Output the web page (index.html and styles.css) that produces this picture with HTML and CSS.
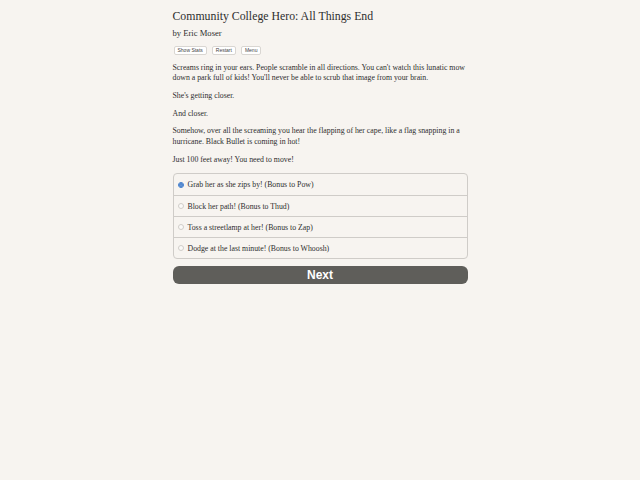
FILE: index.html
```html
<!DOCTYPE html>
<html lang="en">
<head>
    <meta charset="UTF-8">
    <title>Community College Hero: All Things End</title>
    <link rel="stylesheet" href="styles.css">
</head>
<body>
    <div class="container">
        <h1 class="title">Community College Hero: All Things End</h1>
        <h2 class="author">by Eric Moser</h2>
        <div class="buttons">
            <button class="small">Show Stats</button>
            <button class="small">Restart</button>
            <button class="small">Menu</button>
        </div>
        <div class="text">
            <p>Screams ring in your ears. People scramble in all directions. You can't watch this lunatic mow down a park full of kids! You'll never be able to scrub that image from your brain.</p>
            <p>She's getting closer.</p>
            <p>And closer.</p>
            <p>Somehow, over all the screaming you hear the flapping of her cape, like a flag snapping in a hurricane. Black Bullet is coming in hot!</p>
            <p>Just 100 feet away! You need to move!</p>
        </div>
        <form class="choices">
            <label class="choice"><input type="radio" name="choice" checked> Grab her as she zips by! (Bonus to Pow)</label>
            <label class="choice"><input type="radio" name="choice"> Block her path! (Bonus to Thud)</label>
            <label class="choice"><input type="radio" name="choice"> Toss a streetlamp at her! (Bonus to Zap)</label>
            <label class="choice"><input type="radio" name="choice"> Dodge at the last minute! (Bonus to Whoosh)</label>
        </form>
        <button class="next">Next</button>
    </div>
</body>
</html>
```

FILE: styles.css
```css
body {
    margin: 0;
    background-color: #f7f4f0;
    color: #2e2e2e;
    font-family: "Liberation Serif", serif;
}
.container {
    width: 295px;
    margin: 0 auto;
    padding-top: 9px;
}
.title {
    font-size: 11.8px;
    line-height: 14px;
    font-weight: normal;
    margin: 0 0 4.5px;
}
.author {
    font-size: 8.6px;
    line-height: 11px;
    font-weight: normal;
    margin: 0 0 7px;
}
.buttons {
    display: flex;
    gap: 5px;
    margin-left: 1px;
    margin-bottom: 8px;
}
.small {
    font-family: "Liberation Sans", sans-serif;
    font-size: 5px;
    height: 9px;
    padding: 0 3px;
    background-color: #fff;
    border: 1px solid #d9d6d2;
    border-radius: 2px;
    color: #444;
}
.text p {
    font-size: 7.8px;
    line-height: 10.5px;
    margin: 0 0 7.25px;
}
.choices {
    border: 1px solid #cfccc8;
    border-radius: 4px;
    margin-top: 8px;
}
.choice {
    display: flex;
    align-items: center;
    height: 20px;
    font-size: 7.8px;
    padding-left: 4px;
    border-top: 1px solid #cfccc8;
}
.choice:first-child {
    height: 21px;
    border-top: none;
}
.choice input {
    appearance: none;
    width: 6px;
    height: 6px;
    margin: 0 4px 0 0;
    border: 1px solid #d0cdc9;
    border-radius: 50%;
    background-color: #fbfaf8;
}
.choice input:checked {
    border-color: #3a78c9;
    background-color: #fff;
    box-shadow: inset 0 0 0 1.5px #3a78c9;
}
.next {
    display: block;
    width: 100%;
    height: 18px;
    margin-top: 7px;
    background-color: #5f5e5a;
    color: #fff;
    border: none;
    border-radius: 6px;
    font-family: "Liberation Sans", sans-serif;
    font-weight: bold;
    font-size: 12px;
}
```
